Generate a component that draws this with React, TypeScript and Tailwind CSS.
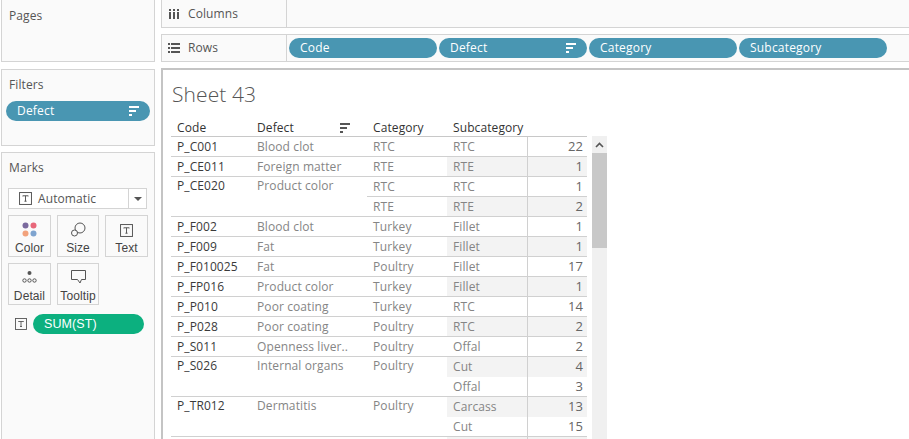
const sans = "font-['Open_Sans',sans-serif]";

type Row = {
  code?: string;
  defect?: string;
  category?: string;
  sub?: string;
  value?: number;
  line: "full" | "cat" | "none";
  merged?: boolean;
};

const rows: Row[] = [
  { code: "P_C001", defect: "Blood clot", category: "RTC", sub: "RTC", value: 22, line: "full" },
  { code: "P_CE011", defect: "Foreign matter", category: "RTE", sub: "RTE", value: 1, line: "full" },
  { code: "P_CE020", defect: "Product color", category: "RTC", sub: "RTC", value: 1, line: "cat", merged: true },
  { category: "RTE", sub: "RTE", value: 2, line: "full" },
  { code: "P_F002", defect: "Blood clot", category: "Turkey", sub: "Fillet", value: 1, line: "full" },
  { code: "P_F009", defect: "Fat", category: "Turkey", sub: "Fillet", value: 1, line: "full" },
  { code: "P_F010025", defect: "Fat", category: "Poultry", sub: "Fillet", value: 17, line: "full" },
  { code: "P_FP016", defect: "Product color", category: "Turkey", sub: "Fillet", value: 1, line: "full" },
  { code: "P_P010", defect: "Poor coating", category: "Turkey", sub: "RTC", value: 14, line: "full" },
  { code: "P_P028", defect: "Poor coating", category: "Poultry", sub: "RTC", value: 2, line: "full" },
  { code: "P_S011", defect: "Openness liver..", category: "Poultry", sub: "Offal", value: 2, line: "full" },
  { code: "P_S026", defect: "Internal organs", category: "Poultry", sub: "Cut", value: 4, line: "none", merged: true },
  { sub: "Offal", value: 3, line: "full" },
  { code: "P_TR012", defect: "Dermatitis", category: "Poultry", sub: "Carcass", value: 13, line: "none", merged: true },
  { sub: "Cut", value: 15, line: "full" },
  { line: "none" },
];

function SortIcon({ color = "white" }: { color?: string }) {
  return (
    <svg width="11" height="10" viewBox="0 0 11 10" fill={color}>
      <rect x="0" y="0" width="10" height="2" />
      <rect x="0" y="4" width="7" height="2" />
      <rect x="0" y="8" width="3" height="2" />
    </svg>
  );
}

function TIcon({ size = 12, className }: { size?: number; className?: string }) {
  return (
    <svg width={size} height={size} viewBox="0 0 12 12" fill="none" stroke="#555" strokeWidth="0.9" className={className}>
      <rect x="0.5" y="0.5" width="11" height="11" />
      <path d="M3.5 4V3.5H8.5V4M6 3.5V8.5M5 8.5H7" />
    </svg>
  );
}

function Pill({ label, sort, className }: { label: string; sort?: boolean; className: string }) {
  return (
    <div className={`flex h-5 items-center justify-between rounded-full bg-[#4996b2] pl-[11px] pr-[10px] text-[12px] tracking-[0.2px] text-white ${className}`}>
      <span>{label}</span>
      {sort && <SortIcon />}
    </div>
  );
}

function MarkButton({ label, icon, className }: { label: string; icon: React.ReactNode; className: string }) {
  return (
    <div className={`flex h-[42px] flex-col items-center border border-[#d4d4d4] bg-[#fafafa] ${className}`}>
      <div className="flex h-[25px] items-end justify-center pb-[3px]">{icon}</div>
      <span className="font-['Liberation_Sans',sans-serif] text-[12px] leading-[15px] text-[#444]">{label}</span>
    </div>
  );
}

function ColorIcon() {
  return (
    <svg width="16" height="16" viewBox="0 0 16 16">
      <circle cx="3.5" cy="3.5" r="3" fill="#7b6a9e" />
      <circle cx="11.5" cy="3.5" r="3" fill="#e8677a" />
      <circle cx="3.5" cy="11.5" r="3" fill="#f2a27c" />
      <circle cx="11.5" cy="11.5" r="3" fill="#7fa4cf" />
    </svg>
  );
}

function SizeIcon() {
  return (
    <svg width="15" height="15" viewBox="0 0 15 15" fill="none" stroke="#555" className="mb-px">
      <circle cx="9" cy="6" r="5" fill="#fafafa" />
      <circle cx="3.5" cy="11" r="3" fill="#fafafa" />
    </svg>
  );
}

function DetailIcon() {
  return (
    <svg width="15" height="14" viewBox="0 0 15 14" fill="none" stroke="#555" className="mb-[2px]">
      <circle cx="7.5" cy="3" r="2" fill="#555" stroke="none" />
      <circle cx="2.5" cy="10.5" r="1.7" />
      <circle cx="7.5" cy="10.5" r="1.7" />
      <circle cx="12.5" cy="10.5" r="1.7" />
    </svg>
  );
}

function TooltipIcon() {
  return (
    <svg width="15" height="14" viewBox="0 0 15 14" fill="none" stroke="#555" className="mb-[2px]">
      <path d="M0.5 0.5H14.5V9.5H10.5L9 13L6.5 9.5H0.5Z" />
    </svg>
  );
}

function App() {
  return (
    <div className={`flex h-[439px] w-[909px] overflow-hidden bg-white ${sans} text-[12px] tracking-[0.1px] text-[#555]`}>
      <aside className="flex w-[161px] shrink-0 flex-col pl-px pr-[6px]">
        <section className="h-[62px] border border-t-0 border-[#d4d4d4] bg-[#fafafa] px-[7px] pt-[7px]">Pages</section>
        <section className="mt-[7px] h-[77px] border border-[#d4d4d4] bg-[#fafafa] px-[4px] pt-[6px]">
          <div className="pl-[3px]">Filters</div>
          <Pill label="Defect" sort className="mt-[7px] w-[144px]" />
        </section>
        <section className="mt-[6px] flex-1 border border-b-0 border-[#d4d4d4] bg-[#fafafa] px-[6px] pt-[6px]">
          <div className="pl-px">Marks</div>
          <div className="mt-[11px] flex h-[21px] w-[139px] items-center border border-[#d4d4d4] bg-white">
            <div className="flex flex-1 items-center gap-[6px] pl-[10px]">
              <TIcon size={13} />
              <span>Automatic</span>
            </div>
            <div className="flex h-full w-[18px] items-center justify-center border-l border-[#d4d4d4]">
              <div className="h-0 w-0 border-x-[4px] border-t-[4px] border-x-transparent border-t-[#555]" />
            </div>
          </div>
          <div className="mt-[6px] flex gap-[6px]">
            <MarkButton label="Color" icon={<ColorIcon />} className="w-[43px]" />
            <MarkButton label="Size" icon={<SizeIcon />} className="w-[42px]" />
            <MarkButton label="Text" icon={<TIcon size={13} className="mb-[1px]" />} className="w-[43px]" />
          </div>
          <div className="mt-[6px] flex gap-[6px]">
            <MarkButton label="Detail" icon={<DetailIcon />} className="w-[43px]" />
            <MarkButton label="Tooltip" icon={<TooltipIcon />} className="w-[42px]" />
          </div>
          <div className="mt-[9px] flex items-center gap-[6px] pl-[7px]">
            <TIcon />
            <div className="flex h-5 w-[111px] items-center rounded-full bg-[#0cb07f] pl-[11px] font-['Liberation_Sans',sans-serif] text-[12.5px] text-white">
              SUM(ST)
            </div>
          </div>
        </section>
      </aside>

      <main className="flex min-w-0 flex-1 flex-col">
        <div className="flex h-[28px] shrink-0 border border-t-0 border-r-0 border-[#d4d4d4] bg-[#fafafa]">
          <div className="flex w-[125px] items-center gap-[8px] border-r border-[#d4d4d4] pl-[7px]">
            <svg width="11" height="10" viewBox="0 0 11 10" fill="#555">
              <rect x="0" y="0" width="2" height="2" />
              <rect x="0" y="3" width="2" height="7" />
              <rect x="4" y="0" width="2" height="2" />
              <rect x="4" y="3" width="2" height="7" />
              <rect x="8" y="0" width="2" height="2" />
              <rect x="8" y="3" width="2" height="7" />
            </svg>
            <span>Columns</span>
          </div>
        </div>
        <div className="mt-[6px] flex h-[28px] shrink-0 border border-r-0 border-[#d4d4d4] bg-[#fafafa]">
          <div className="flex w-[125px] items-center gap-[8px] border-r border-[#d4d4d4] pl-[6px]">
            <svg width="12" height="10" viewBox="0 0 12 10" fill="#555">
              <rect x="0" y="0" width="2" height="2" />
              <rect x="3" y="0" width="9" height="2" />
              <rect x="0" y="4" width="2" height="2" />
              <rect x="3" y="4" width="9" height="2" />
              <rect x="0" y="8" width="2" height="2" />
              <rect x="3" y="8" width="9" height="2" />
            </svg>
            <span>Rows</span>
          </div>
          <div className="flex items-center gap-[2px] pl-[2px]">
            <Pill label="Code" className="w-[148px]" />
            <Pill label="Defect" sort className="w-[148px]" />
            <Pill label="Category" className="w-[148px]" />
            <Pill label="Subcategory" className="w-[148px]" />
          </div>
        </div>

        <div className="mt-[6px] min-h-0 flex-1 overflow-hidden border-t-2 border-l-2 border-[#c4c4c4] pl-[8px]">
          <h1 className="pt-[10px] pl-[1px] text-[21px] leading-[28px] font-light text-[#555]">Sheet 43</h1>
          <div className="mt-[10px] flex">
            <div className="w-[416px] shrink-0">
              <div className="flex h-[19px] w-[416px] items-center border-b border-[#c8c8c8] pt-[2px] text-[#333]">
                <div className="w-[80px] pl-[6px]">Code</div>
                <div className="flex w-[116px] items-center justify-between pr-[16px] pl-[6px]">
                  <span>Defect</span>
                  <SortIcon color="#555" />
                </div>
                <div className="w-[80px] pl-[6px]">Category</div>
                <div className="w-[80px] pl-[6px]">Subcategory</div>
              </div>
              {rows.map((row, i) => {
                const rule = "border-b border-[#d0d0d0]";
                const band = i % 2 === 1 ? "bg-[#f3f3f3]" : "";
                const up = row.merged ? "pb-[2px]" : "";
                return (
                  <div key={i} className="flex h-5 text-[#858585]">
                    <div className={`flex w-[80px] items-center pl-[6px] text-[#3a3a3a] ${up} ${row.line === "full" ? rule : ""}`}>{row.code}</div>
                    <div className={`flex w-[116px] items-center pl-[6px] ${up} ${row.line === "full" ? rule : ""}`}>{row.defect}</div>
                    <div className={`flex w-[80px] items-center pl-[6px] ${row.line === "none" ? "pb-[2px]" : rule}`}>{row.category}</div>
                    <div className={`flex w-[81px] items-center border-r border-[#d0d0d0] pl-[6px] ${band} ${row.line === "none" ? "" : rule}`}>{row.sub}</div>
                    <div className={`flex w-[59px] items-center justify-end pr-[4px] text-[13px] text-[#666] ${band} ${row.line === "none" ? "" : rule}`}>{row.value}</div>
                  </div>
                );
              })}
            </div>
            <div className="mt-[18px] ml-[5px] h-[310px] w-[15px] shrink-0 bg-[#f0f0f0]">
              <div className="flex h-[17px] items-center justify-center">
                <svg width="9" height="6" viewBox="0 0 9 6" fill="none" stroke="#555" strokeWidth="1.6">
                  <path d="M1 5L4.5 1.5L8 5" />
                </svg>
              </div>
              <div className="h-[95px] bg-[#c8c8c8]" />
            </div>
          </div>
        </div>
      </main>
    </div>
  );
}

export default App;
